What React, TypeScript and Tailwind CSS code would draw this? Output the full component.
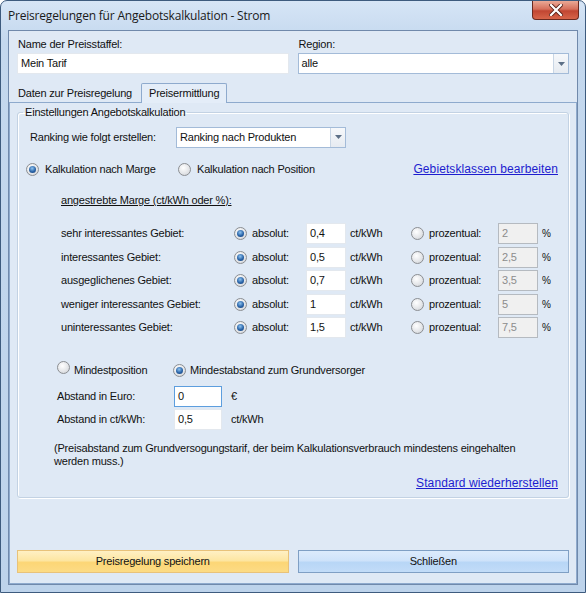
import React from "react";

const body = "font-['Liberation_Sans',Arial,sans-serif] text-[11px] tracking-[-0.2px] text-[#111]";
const link = "text-[12px] tracking-[0.1px] text-[#1d1dcf] underline";

function Radio({ checked = false }: { checked?: boolean }) {
  return (
    <span className="relative inline-flex h-[13px] w-[13px] shrink-0 items-center justify-center rounded-full border border-[#8b8e92] bg-[radial-gradient(circle_at_40%_35%,#ffffff,#e2e4e7_60%,#c9ccd0)]">
      {checked && (
        <span className="h-[7px] w-[7px] rounded-full bg-[radial-gradient(circle_at_45%_35%,#8fc4f0,#2a64a8_55%,#123a70)]" />
      )}
    </span>
  );
}

function TextBox({ value, w, disabled = false, focus = false }: { value: string; w: string; disabled?: boolean; focus?: boolean }) {
  const cls = disabled
    ? "bg-[#f0f0f0] border-[#b5bac0] text-[#8c8c8c]"
    : focus
    ? "bg-white border-[#5d9ede]"
    : "bg-white border-[#e3e8ee]";
  return (
    <div className={`${w} flex h-[21px] shrink-0 items-center border px-[3px] ${cls}`}>
      {value}
    </div>
  );
}

function Combo({ value, w }: { value: string; w: string }) {
  return (
    <div className={`${w} flex h-[21px] items-stretch border border-[#a3bbd8] bg-white`}>
      <div className="flex flex-1 items-center px-[3px]">{value}</div>
      <div className="flex w-[15px] items-center justify-center border-l border-[#c9d6e5] bg-[linear-gradient(#f6f8fb,#e6ebf1)]">
        <svg width="7" height="4" viewBox="0 0 7 4">
          <path d="M0 0h7L3.5 4z" fill="#5c6f86" />
        </svg>
      </div>
    </div>
  );
}

const rows = [
  { label: "sehr interessantes Gebiet:", abs: "0,4", pct: "2" },
  { label: "interessantes Gebiet:", abs: "0,5", pct: "2,5" },
  { label: "ausgeglichenes Gebiet:", abs: "0,7", pct: "3,5" },
  { label: "weniger interessantes Gebiet:", abs: "1", pct: "5" },
  { label: "uninteressantes Gebiet:", abs: "1,5", pct: "7,5" },
];

export default function App() {
  return (
    <div className="h-[593px] w-[586px] bg-white">
      <div className="flex h-[593px] w-[586px] flex-col rounded-t-[7px] border border-[#3d5b7e] bg-[linear-gradient(#d6e5f6,#c4d8ee_40px,#bdd3eb)]">
        {/* title bar */}
        <div className="flex h-[29px] items-start justify-between pl-[7px] pr-[6px]">
          <span className="mt-[6px] font-['Open_Sans',sans-serif] text-[12px] tracking-[-0.2px] text-[#1a1a1a]">
            Preisregelungen für Angebotskalkulation - Strom
          </span>
          <div className="flex h-[19px] w-[47px] items-center justify-center rounded-b-[4px] border border-t-0 border-[#6a2a20] bg-[linear-gradient(#eaa996,#d6705c_45%,#c14632_55%,#d7654a)]">
            <svg width="14" height="12" viewBox="0 0 14 12">
              <path d="M2 1l10 10M12 1L2 11" stroke="#5a2218" strokeWidth="4" strokeLinecap="square" />
              <path d="M2 1l10 10M12 1L2 11" stroke="#ffffff" strokeWidth="2.2" strokeLinecap="square" />
            </svg>
          </div>
        </div>

        {/* client area */}
        <div className={`mx-[7px] mb-[7px] flex flex-1 flex-col border border-[#7089ab] bg-[#dfe9f5] ${body}`}>
          <div className="grid grid-cols-2 gap-x-[9px] px-[8px] pt-[7px]">
            <div>
              <div className="pl-[1px] leading-[13px]">Name der Preisstaffel:</div>
              <div className="mt-[2px]">
                <TextBox value="Mein Tarif" w="w-full" />
              </div>
            </div>
            <div>
              <div className="pl-[1px] leading-[13px]">Region:</div>
              <div className="mt-[2px]">
                <Combo value="alle" w="w-full" />
              </div>
            </div>
          </div>

          {/* tabs */}
          <div className="mt-[9px] flex h-[19px] items-end pl-[3px]">
            <div className="flex h-[18px] w-[129px] items-center px-[6px]">Daten zur Preisregelung</div>
            <div className="relative top-[1px] flex h-[20px] items-center rounded-t-[2px] border border-b-0 border-[#8eaacd] bg-[#e4edf8] px-[7px]">
              Preisermittlung
            </div>
          </div>

          <div className="flex flex-1 flex-col border border-[#8eaacd] bg-[#dfe9f5] px-[7px]">
            <fieldset className="mt-[3px] rounded-[3px] border border-[#c3d2e3] shadow-[inset_1px_1px_0_#ffffff,1px_1px_0_#ffffff]">
              <legend className="ml-[5px] px-[2px] leading-[13px]">Einstellungen Angebotskalkulation</legend>

              <div className="mt-[8px] flex h-[20px] items-center">
                <span className="ml-[12px] w-[146px]">Ranking wie folgt erstellen:</span>
                <Combo value="Ranking nach Produkten" w="w-[170px]" />
              </div>

              <div className="mt-[15px] flex h-[14px] items-center pr-[10px]">
                <span className="ml-[8px]">
                  <Radio checked />
                </span>
                <span className="ml-[6px] w-[133px]">Kalkulation nach Marge</span>
                <Radio />
                <span className="ml-[6px]">Kalkulation nach Position</span>
                <span className={`ml-auto ${link}`}>Gebietsklassen bearbeiten</span>
              </div>

              <div className="mt-[18px] ml-[43px] leading-[13px] underline">angestrebte Marge (ct/kWh oder %):</div>

              <div className="mt-[16px] flex flex-col gap-[2.5px]">
                {rows.map((r) => (
                  <div key={r.label} className="flex h-[21px] items-center">
                    <span className="ml-[43px] w-[173px]">{r.label}</span>
                    <Radio checked />
                    <span className="ml-[5px] w-[54px]">absolut:</span>
                    <TextBox value={r.abs} w="w-[40px]" />
                    <span className="ml-[4px] w-[61px]">ct/kWh</span>
                    <Radio />
                    <span className="ml-[5px] w-[69px]">prozentual:</span>
                    <TextBox value={r.pct} w="w-[40px]" disabled />
                    <span className="ml-[4px] text-[10px]">%</span>
                  </div>
                ))}
              </div>

              <div className="mt-[25px] flex h-[14px] items-center">
                <span className="ml-[39px]">
                  <Radio />
                </span>
                <span className="ml-[4px] w-[99px]">Mindestposition</span>
                <Radio checked />
                <span className="ml-[4px]">Mindestabstand zum Grundversorger</span>
              </div>

              <div className="mt-[9px] flex h-[21px] items-center">
                <span className="ml-[39px] w-[117px]">Abstand in Euro:</span>
                <TextBox value="0" w="w-[48px]" focus />
                <span className="ml-[9px]">€</span>
              </div>
              <div className="mt-[2px] flex h-[21px] items-center">
                <span className="ml-[39px] w-[117px]">Abstand in ct/kWh:</span>
                <TextBox value="0,5" w="w-[48px]" />
                <span className="ml-[9px]">ct/kWh</span>
              </div>

              <p className="mt-[12px] ml-[36px] pr-[10px] leading-[13px]">
                (Preisabstand zum Grundversogungstarif, der beim Kalkulationsverbrauch mindestens eingehalten
                <br />
                werden muss.)
              </p>

              <div className="mt-[8px] mb-[7px] flex justify-end pr-[10px] leading-[14px]">
                <span className={link}>Standard wiederherstellen</span>
              </div>
            </fieldset>

            <div className="mt-auto mb-[10px] grid grid-cols-2 gap-x-[9px]">
              <button className="flex h-[23px] items-center justify-center border border-[#e8c27a] bg-[linear-gradient(#fff0c4,#fde6a2_45%,#fcd676_55%,#fcdb85)]">
                Preisregelung speichern
              </button>
              <button className="flex h-[23px] items-center justify-center border border-[#7f9fc4] bg-[linear-gradient(#dcebfc,#cfe3fa_45%,#b8d6f6_55%,#c2dcf8)]">
                Schließen
              </button>
            </div>
          </div>
        </div>
      </div>
    </div>
  );
}
